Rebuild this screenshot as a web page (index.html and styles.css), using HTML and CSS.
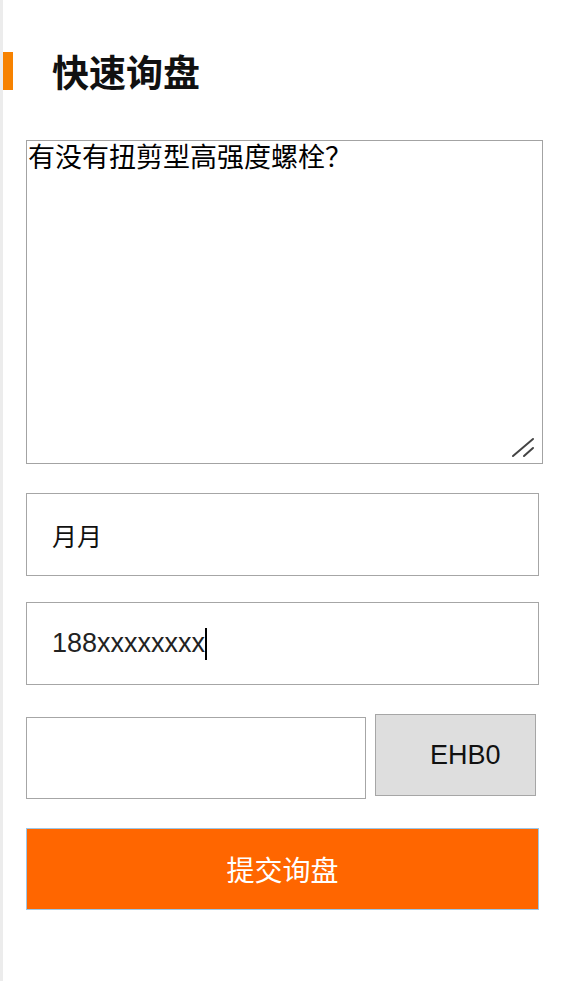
FILE: index.html
```html
<!DOCTYPE html>
<html lang="zh-CN">
<head>
<meta charset="utf-8">
<title>快速询盘</title>
<link rel="stylesheet" href="styles.css">
</head>
<body>
<div class="page">
  <div class="heading">
    <span class="heading-bar"></span>
    <h2 class="heading-text">快速询盘</h2>
  </div>
  <form class="form">
    <div class="message-wrap">
      <textarea class="message">有没有扭剪型高强度螺栓？</textarea>
      <svg class="grip" width="28" height="24" viewBox="0 0 28 24" aria-hidden="true">
        <line x1="2" y1="19" x2="22" y2="2" stroke="#444" stroke-width="2" stroke-linecap="round"/>
        <line x1="13" y1="19" x2="22" y2="11" stroke="#444" stroke-width="2" stroke-linecap="round"/>
      </svg>
    </div>
    <div class="field"><span class="field-text cjk">月月</span></div>
    <div class="field"><span class="field-text latin">188xxxxxxxx</span><span class="caret"></span></div>
    <div class="captcha-row">
      <div class="field captcha-input"></div>
      <div class="captcha-code">EHB0</div>
    </div>
    <button type="button" class="submit">提交询盘</button>
  </form>
</div>
</body>
</html>
```

FILE: styles.css
```css
html, body {
  margin: 0;
  padding: 0;
  background: #ffffff;
}

body {
  font-family: "Noto Sans CJK SC", "Liberation Sans", sans-serif;
  color: #000;
}

.page {
  min-height: 981px;
  border-left: 3px solid #ececec;
  box-sizing: border-box;
}

.heading {
  display: flex;
  align-items: center;
  height: 38px;
  padding-top: 52px;
}

.heading-bar {
  width: 10px;
  height: 38px;
  background: #f78200;
  flex: none;
}

.heading-text {
  margin: 0 0 0 39px;
  font-family: "Noto Sans CJK SC", sans-serif;
  font-size: 37px;
  line-height: 38px;
  font-weight: bold;
  color: #111;
}

.form {
  display: flex;
  flex-direction: column;
  align-items: flex-start;
  padding-left: 23px;
  margin-top: 50px;
}

.message-wrap {
  position: relative;
  width: 517px;
  height: 324px;
}

.message {
  width: 517px;
  height: 324px;
  box-sizing: border-box;
  border: 1px solid #a3a3a3;
  padding: 0 1px;
  margin: 0;
  font-family: "Noto Sans CJK SC", sans-serif;
  font-size: 27px;
  line-height: 30px;
  color: #000;
  resize: none;
  display: block;
  text-spacing-trim: space-all;
  font-feature-settings: "fwid" 1;
}

.grip {
  position: absolute;
  right: 4px;
  bottom: 3px;
}

.field {
  width: 513px;
  height: 83px;
  box-sizing: border-box;
  border: 1px solid #a6a6a6;
  display: flex;
  align-items: center;
  padding-left: 25px;
  margin-top: 29px;
  background: #fff;
}

.field + .field {
  margin-top: 26px;
}

.field-text.cjk {
  font-family: "Noto Sans CJK SC", sans-serif;
  font-size: 25px;
  color: #111;
}

.field-text.latin {
  font-family: "Liberation Sans", sans-serif;
  font-size: 27px;
  color: #222;
}

.caret {
  display: inline-block;
  width: 2px;
  height: 32px;
  background: #000;
}

.captcha-row {
  display: flex;
  align-items: flex-start;
  gap: 9px;
  margin-top: 29px;
}

.captcha-row .field.captcha-input {
  width: 340px;
  height: 82px;
  margin-top: 3px;
}

.captcha-code {
  width: 161px;
  height: 82px;
  box-sizing: border-box;
  border: 1px solid #a6a6a6;
  background: #dedede;
  display: flex;
  align-items: center;
  padding-left: 54px;
  font-family: "Liberation Sans", sans-serif;
  font-size: 27px;
  color: #111;
}

.submit {
  width: 513px;
  height: 82px;
  margin-top: 29px;
  border: 1px solid #9cc6e6;
  background: #ff6600;
  color: #fff;
  font-family: "Noto Sans CJK SC", sans-serif;
  font-size: 28px;
  padding: 0;
  cursor: pointer;
}
```
